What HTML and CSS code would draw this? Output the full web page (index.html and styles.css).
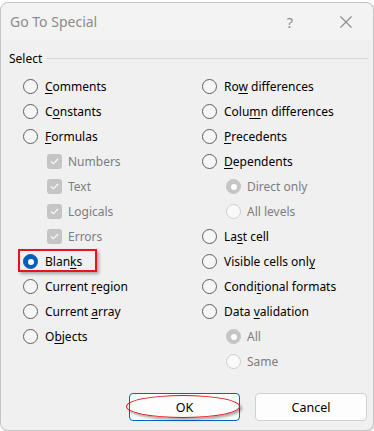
FILE: index.html
```html
<!DOCTYPE html>
<html lang="en">
<head>
    <meta charset="UTF-8">
    <title>Go To Special</title>
    <link rel="stylesheet" href="styles.css">
</head>
<body>
    <div class="dialog">
        <div class="titlebar">
            <span class="title">Go To Special</span>
            <span class="help">?</span>
            <span class="close">
                <svg width="12" height="12" viewBox="0 0 12 12"><path d="M0.5 0.5L11.5 11.5M11.5 0.5L0.5 11.5" stroke="#8a8a8a" stroke-width="1.1" fill="none"/></svg>
            </span>
        </div>

        <div class="group-label">
            <span>Select</span>
            <div class="rule"></div>
        </div>

        <div class="options">
            <div class="column">
                <div class="option"><span class="radio"></span><span><u>C</u>omments</span></div>
                <div class="option"><span class="radio"></span><span>C<u>o</u>nstants</span></div>
                <div class="option"><span class="radio"></span><span><u>F</u>ormulas</span></div>
                <div class="option sub disabled"><span class="check"><svg width="9" height="7" viewBox="0 0 9 7"><path d="M1 3.5L3.3 5.8L8 1" stroke="#fff" stroke-width="1.1" fill="none"/></svg></span><span>Numbers</span></div>
                <div class="option sub disabled"><span class="check"><svg width="9" height="7" viewBox="0 0 9 7"><path d="M1 3.5L3.3 5.8L8 1" stroke="#fff" stroke-width="1.1" fill="none"/></svg></span><span>Text</span></div>
                <div class="option sub disabled"><span class="check"><svg width="9" height="7" viewBox="0 0 9 7"><path d="M1 3.5L3.3 5.8L8 1" stroke="#fff" stroke-width="1.1" fill="none"/></svg></span><span>Logicals</span></div>
                <div class="option sub disabled"><span class="check"><svg width="9" height="7" viewBox="0 0 9 7"><path d="M1 3.5L3.3 5.8L8 1" stroke="#fff" stroke-width="1.1" fill="none"/></svg></span><span>Errors</span></div>
                <div class="option"><span class="radio selected"></span><span>Blan<u>k</u>s</span><div class="highlight"></div></div>
                <div class="option"><span class="radio"></span><span>Current <u>r</u>egion</span></div>
                <div class="option"><span class="radio"></span><span>Current <u>a</u>rray</span></div>
                <div class="option"><span class="radio"></span><span>O<u>b</u>jects</span></div>
            </div>
            <div class="column">
                <div class="option"><span class="radio"></span><span>Ro<u>w</u> differences</span></div>
                <div class="option"><span class="radio"></span><span>Colu<u>m</u>n differences</span></div>
                <div class="option"><span class="radio"></span><span><u>P</u>recedents</span></div>
                <div class="option"><span class="radio"></span><span><u>D</u>ependents</span></div>
                <div class="option sub disabled"><span class="radio dim-on"></span><span>Direct only</span></div>
                <div class="option sub disabled"><span class="radio dim"></span><span>All levels</span></div>
                <div class="option"><span class="radio"></span><span>La<u>s</u>t cell</span></div>
                <div class="option"><span class="radio"></span><span>Visible cells onl<u>y</u></span></div>
                <div class="option"><span class="radio"></span><span>Condi<u>t</u>ional formats</span></div>
                <div class="option"><span class="radio"></span><span>Data <u>v</u>alidation</span></div>
                <div class="option sub disabled"><span class="radio dim-on"></span><span>All</span></div>
                <div class="option sub disabled"><span class="radio dim"></span><span>Same</span></div>
            </div>
        </div>

        <div class="buttons">
            <button class="btn primary">OK<span class="ellipse"></span></button>
            <button class="btn">Cancel</button>
        </div>
    </div>
</body>
</html>
```

FILE: styles.css
```css
body {
    margin: 0;
    background: #ffffff;
    font-family: "Noto Sans", "Open Sans", Arial, sans-serif;
    font-size: 12px;
}
.dialog {
    width: 372px;
    height: 427px;
    margin-top: 2px;
    border: 1px solid #c4c4c4;
    border-radius: 8px;
    background: #f0f0f0;
    box-shadow: 1px 1px 2px rgba(0,0,0,0.15);
    display: flex;
    flex-direction: column;
}
.titlebar {
    height: 37px;
    display: flex;
    align-items: center;
    padding-left: 9px;
    background: #f3f3f3;
    border-radius: 8px 8px 0 0;
}
.title {
    font-size: 14px;
    color: #8c8c8c;
    flex: 1;
}
.help {
    font-size: 14.5px;
    color: #8c8c8c;
    margin-right: 47px;
}
.close {
    display: flex;
    margin-right: 21px;
}
.group-label {
    display: flex;
    align-items: center;
    margin-top: 10px;
    height: 16px;
    padding-left: 8px;
    padding-right: 5px;
    color: #000;
}
.group-label .rule {
    flex: 1;
    height: 1px;
    background: #d7d7d7;
    margin-left: 5px;
}
.options {
    display: grid;
    grid-template-columns: 179px 1fr;
    margin-top: 8px;
    padding-left: 22px;
}
.option {
    position: relative;
    height: 25px;
    display: flex;
    align-items: center;
    gap: 7px;
    color: #000;
    white-space: nowrap;
}
.option u {
    text-underline-offset: 2px;
}
.option.sub {
    padding-left: 24px;
    gap: 6px;
}
.disabled {
    color: #7d7d7d;
}
.radio {
    width: 13px;
    height: 13px;
    border: 1px solid #5f5f5f;
    border-radius: 50%;
    background: #f6f6f6;
    flex: none;
    display: flex;
    align-items: center;
    justify-content: center;
}
.radio.selected {
    background: #005fb8;
    border-color: #005fb8;
}
.radio.selected::after,
.radio.dim-on::after {
    content: "";
    width: 6px;
    height: 6px;
    border-radius: 50%;
    background: #ffffff;
}
.radio.dim-on {
    background: #c5c5c5;
    border-color: #c5c5c5;
}
.radio.dim {
    border-color: #cdcdcd;
    background: #f9f9f9;
}
.check {
    width: 15px;
    height: 15px;
    border-radius: 3px;
    background: #c5c5c5;
    flex: none;
    display: flex;
    align-items: center;
    justify-content: center;
}
.highlight {
    position: absolute;
    left: -5px;
    top: 0;
    width: 75px;
    height: 19px;
    border: 2px solid #e8141b;
    box-shadow: 2px 2px 3px rgba(0,0,0,0.3);
}
.buttons {
    margin-top: auto;
    display: flex;
    justify-content: flex-end;
    gap: 15px;
    padding: 0 6px 9px 0;
}
.btn {
    position: relative;
    width: 112px;
    height: 28px;
    border: 1px solid #d0d0d0;
    border-radius: 4px;
    background: #fdfdfd;
    font-family: "Noto Sans", "Open Sans", Arial, sans-serif;
    font-size: 12.5px;
    color: #000;
    padding: 0;
}
.btn.primary {
    width: 111px;
    border-color: #0067c0;
}
.ellipse {
    position: absolute;
    left: -4px;
    top: 1px;
    width: 112px;
    height: 21px;
    border: 1.5px solid #e8141b;
    border-radius: 50%;
    box-shadow: 2px 2px 3px rgba(0,0,0,0.35);
}
```
